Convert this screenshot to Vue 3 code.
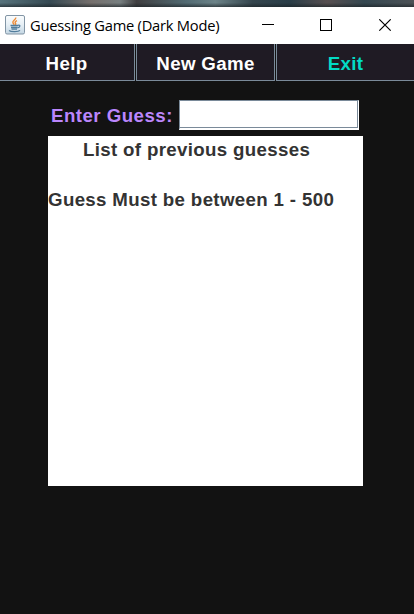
<script setup>
const menu = [
  { label: 'Help', kind: 'help' },
  { label: 'New Game', kind: 'new' },
  { label: 'Exit', kind: 'exit' },
]
</script>

<template>
  <div class="window">
    <div class="backdrop"></div>
    <header class="titlebar">
      <svg class="java" width="20" height="20" viewBox="0 0 20 20">
        <defs>
          <linearGradient id="tile" x1="0" y1="0" x2="0" y2="1">
            <stop offset="0" stop-color="#fbfdfe" />
            <stop offset="0.5" stop-color="#e6eff5" />
            <stop offset="1" stop-color="#c3d6e3" />
          </linearGradient>
        </defs>
        <rect x="0.5" y="0.5" width="19" height="18.5" rx="1.5" fill="url(#tile)" stroke="#8295a5" />
        <path d="M10.7 2.5c.8 2-3.5 3-2.8 5 .2.9 1 1.4 1.2 2.3M12 5.6c-1.8.8-2.4 1.7-1.5 2.7.5.6.3 1.2-.2 1.7" fill="none" stroke="#ee8b35" stroke-width="1.4" />
        <path d="M5.5 10.5h7.500M6 12.500h6.500M6.500 14.200h5.500" fill="none" stroke="#527d9c" stroke-width="1.300" />
        <path d="M13 10.300c2.800-.6 2.400 2-.6 2.500M4 15.500c2 1.700 9.500 1.500 11-.1" fill="none" stroke="#527d9c" stroke-width="1.200" />
      </svg>
      <span class="title">Guessing Game (Dark Mode)</span>
      <svg class="controls" width="130" height="12" viewBox="0 0 130 12" fill="none" stroke="#000">
        <path d="M0 5.500h12" />
        <rect x="58.500" y="0.500" width="11" height="11" />
        <path d="M117.300.3l11.400 11.400M128.700.3l-11.400 11.400" stroke-width="1.100" />
      </svg>
    </header>
    <nav class="menu">
      <button v-for="m in menu" :key="m.kind" :class="['item', m.kind]">{{ m.label }}</button>
    </nav>
    <main class="content">
      <div class="entry">
        <label class="label" for="guess">Enter Guess:</label>
        <div class="field"><input id="guess" class="input" type="text" /></div>
      </div>
      <section class="list">
        <p class="heading">List of previous guesses</p>
        <p class="message">Guess Must be between 1 - 500</p>
      </section>
    </main>
  </div>
</template>

<style>
body {
  margin: 0;
  background: #121212;
}
</style>

<style scoped>
.window {
  width: 414px;
  height: 614px;
  overflow: hidden;
  display: flex;
  flex-direction: column;
  background: #121212;
  font: bold 18.7px/20px "Liberation Sans", Arial, sans-serif;
  letter-spacing: 0.34px;
}
.backdrop {
  height: 7px;
  flex: none;
  background:
    linear-gradient(to bottom, transparent 40%, rgba(25, 32, 36, 0.65)),
    linear-gradient(to right, #57737c 0, #354952 12%, #756f6c 22%, #777f80 29%, #3f3e40 33%, #526b73 45%, #6c8388 52%, #34454d 61%, #293d47 70%, #574f50 79%, #344750 88%, #4d5256 100%);
}
.titlebar {
  box-sizing: border-box;
  height: 37px;
  flex: none;
  display: flex;
  align-items: center;
  padding-left: 5px;
  background: #fff;
}
.java {
  margin-bottom: 1px;
}
.title {
  width: 232px;
  margin-left: 5px;
  margin-bottom: 2px;
  font: 14.7px/20px "Open Sans", "Noto Sans", sans-serif;
  letter-spacing: -0.24px;
  color: #000;
  white-space: nowrap;
}
.controls {
  margin-bottom: 1px;
}
.menu {
  height: 37px;
  flex: none;
  display: grid;
  grid-template-columns: 135px 139px 138px;
  column-gap: 1px;
}
.item {
  box-sizing: border-box;
  height: 37px;
  margin: 0;
  padding: 3px 0 0;
  border: 0 solid #7a8a99;
  border-bottom-width: 1px;
  border-right-width: 1px;
  border-radius: 0;
  background: #1f1b24;
  color: #fff;
  font: inherit;
  letter-spacing: inherit;
}
.help {
  padding-right: 1px;
}
.new,
.exit {
  border-left-width: 1px;
}
.exit {
  border-right-width: 0;
  color: #03dac5;
}
.content {
  padding: 19px 51px 0 48px;
}
.entry {
  height: 30px;
  display: flex;
  padding-left: 3px;
}
.label {
  width: 128px;
  padding-top: 6px;
  color: #bb86fc;
  letter-spacing: 0.46px;
  white-space: nowrap;
}
.field {
  box-sizing: border-box;
  width: 180px;
  height: 30px;
  border: 1px solid #fff;
  border-top-color: #7a8a99;
  border-left-color: #7a8a99;
  border-bottom-width: 2px;
  background: #fff;
}
.input {
  display: block;
  box-sizing: border-box;
  width: 178px;
  height: 27px;
  border: 0 solid #7a8a99;
  border-right-width: 1px;
  border-bottom-width: 1px;
  border-radius: 0;
  padding: 0 4px;
  background: #fff;
  font: inherit;
  outline: none;
}
.list {
  height: 350px;
  margin-top: 6px;
  background: #fff;
  color: #333;
}
.heading {
  margin: 0;
  padding: 4px 0 0 35px;
}
.message {
  margin: 30px 0 0;
  white-space: nowrap;
}
</style>
